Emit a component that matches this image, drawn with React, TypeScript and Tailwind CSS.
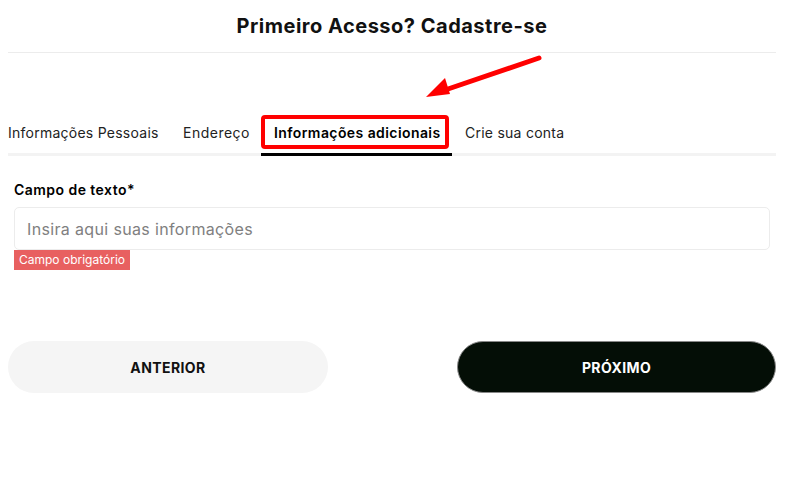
import React from "react";

export default function App() {
  const font = { fontFamily: "Inter, 'Noto Sans', sans-serif" };
  return (
    <div className="w-[790px] h-[484px] bg-white relative" style={font}>
      <div className="px-2 w-[784px]">
        <h1 className="text-center text-[20px] font-bold text-[#111] tracking-[0.5px] pt-[13px] pb-[13px] leading-[26px]">
          Primeiro Acesso? Cadastre-se
        </h1>
        <div className="h-px bg-[#ececec] w-[768px]" />
        <div className="h-[64px]" />
        <div className="flex items-end border-b-[3px] border-[#f3f3f3] w-[768px] h-[39px]">
          <div className="w-[175px] text-[14px] text-[#222] tracking-[0.25px] pb-[11px] leading-[18px]">Informações Pessoais</div>
          <div className="w-[78px] text-[14px] text-[#222] tracking-[0.5px] pb-[11px] leading-[18px]">Endereço</div>
          <div className="relative w-[191px] mb-[-3px] border-b-[3px] border-black pl-[13px] pb-[11px] leading-[18px] text-[14px] font-semibold tracking-[0.42px] text-black mr-[13px]">
            Informações adicionais
            <div className="absolute left-0 top-[-9px] w-[188px] h-[34px] border-[4px] border-[#ff0000] rounded-[4px]" />
          </div>
          <div className="text-[14px] text-[#222] tracking-[0.25px] pb-[11px] leading-[18px]">Crie sua conta</div>
        </div>
        <div className="px-[6px] pt-[25px] w-[768px]">
          <div className="text-[14px] font-semibold text-black tracking-[0.45px] leading-[18px] mb-[8px]">Campo de texto*</div>
          <div className="h-[43px] border border-[#ececec] rounded-[5px] flex items-center px-[12px] text-[16px] tracking-[0.35px] text-[#808080]">
            Insira aqui suas informações
          </div>
          <div className="w-fit bg-[#e86060] text-white text-[12px] leading-[20px] px-[5px]">Campo obrigatório</div>
        </div>
        <div className="flex justify-between w-[768px] mt-[71px]">
          <button className="w-[320px] h-[52px] rounded-full bg-[#f5f5f5] text-[14px] font-bold tracking-[0.4px] text-[#111]">ANTERIOR</button>
          <button className="w-[319px] h-[52px] rounded-full bg-[#040e06] border border-[#888] text-[14px] font-bold tracking-[0.4px] text-white">PRÓXIMO</button>
        </div>
      </div>
      <svg className="absolute left-0 top-0 pointer-events-none" width="790" height="484">
        <line x1="539" y1="58" x2="448" y2="89" stroke="#ff0000" strokeWidth="5" strokeLinecap="round" />
        <polygon points="426,97 445,78 450,94" fill="#ff0000" />
      </svg>
    </div>
  );
}
